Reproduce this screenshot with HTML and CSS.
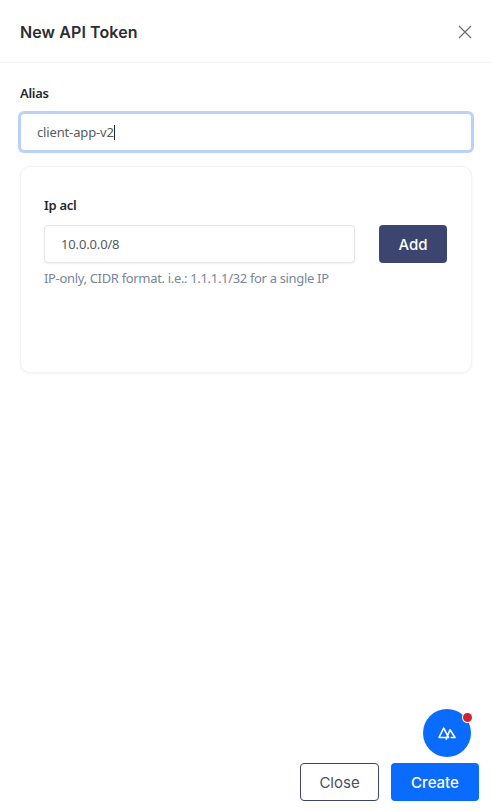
FILE: index.html
```html
<!DOCTYPE html>
<html lang="en">
<head>
  <meta charset="UTF-8" />
  <meta name="viewport" content="width=device-width, initial-scale=1.0"/>
  <title>New API Token</title>
  <link rel="stylesheet" href="styles.css">
</head>
<body>
  <div class="drawer">
    <!-- Header -->
    <header class="drawer-head">
      <h1>New API Token</h1>
      <button class="close-x" aria-label="Close">
        <svg width="14" height="14" viewBox="0 0 14 14"><path d="M1 1L13 13M13 1L1 13" stroke="#6b6f76" stroke-width="1.3" fill="none"/></svg>
      </button>
    </header>

    <!-- Form -->
    <main class="drawer-body">
      <label class="label">Alias</label>
      <div class="input input-focus"><span>client-app-v2</span><i class="caret"></i></div>

      <div class="card">
        <label class="label">Ip acl</label>
        <div class="acl-row">
          <div class="input"><span>10.0.0.0/8</span></div>
          <button class="btn btn-add">Add</button>
        </div>
        <p class="hint">IP-only, CIDR format. i.e.: 1.1.1.1/32 for a single IP</p>
      </div>
    </main>

    <!-- Footer -->
    <footer class="drawer-foot">
      <button class="btn btn-close">Close</button>
      <button class="btn btn-create">Create</button>
    </footer>
  </div>

  <button class="help" aria-label="Help">
    <svg width="18" height="13" viewBox="0 0 18 13"><path d="M1 10.5L5.7 1.2L10.6 10.5ZM8 12.6L12 2.8L17 10.5H12.6" stroke="#fff" stroke-width="1.6" fill="none" stroke-linejoin="round"/></svg>
    <span class="dot"></span>
  </button>
</body>
</html>
```

FILE: styles.css
```css
* {
  box-sizing: border-box;
}
body {
  margin: 0;
  background: #fff;
  font-family: "Noto Sans", sans-serif;
  color: #24262b;
}
.drawer {
  height: 811px;
  display: flex;
  flex-direction: column;
}
.drawer-head {
  height: 63px;
  flex: none;
  display: flex;
  align-items: center;
  justify-content: space-between;
  padding: 1px 20px 0;
  border-bottom: 1px solid #f0f1f3;
}
.drawer-head h1 {
  margin: 0;
  font-family: Inter, sans-serif;
  font-size: 16px;
  font-weight: 600;
  letter-spacing: 0.1px;
  color: #2b2d33;
}
.close-x {
  border: 0;
  padding: 0;
  background: none;
  display: flex;
}
.drawer-body {
  flex: 1;
  padding: 21px 20px 0;
}
.label {
  display: block;
  font-size: 13px;
  font-weight: 600;
  letter-spacing: -0.3px;
  line-height: 18px;
  color: #26282d;
  margin-bottom: 11px;
}
.input {
  height: 38px;
  flex: 1;
  display: flex;
  align-items: center;
  padding: 0 16px;
  background: #fff;
  border: 1px solid #e4e6ea;
  border-radius: 4px;
  box-shadow: 0 1px 2px rgba(0,0,0,0.06);
  font-size: 13px;
  letter-spacing: -0.15px;
  color: #555a60;
}
.input-focus {
  border: 1px solid #b9d2f8;
  box-shadow: 0 0 0 2px #b9d2f8;
}
.caret {
  width: 1px;
  height: 15px;
  background: #222;
}
.card {
  height: 207px;
  margin-top: 15px;
  padding: 29px 23px 0 23px;
  background: #fff;
  border: 1px solid #f2f3f5;
  border-radius: 10px;
  box-shadow: 0 1px 3px rgba(0,0,0,0.05);
}
.acl-row {
  display: flex;
  gap: 24px;
  padding-right: 1px;
}
.hint {
  margin: 6px 0 0;
  font-size: 13px;
  letter-spacing: -0.33px;
  line-height: 18px;
  color: #7a8699;
}
.btn {
  height: 38px;
  border-radius: 4px;
  font-family: Inter, sans-serif;
  font-size: 15px;
  font-weight: 500;
  cursor: pointer;
}
.btn-add {
  width: 68px;
  flex: none;
  background: #3b4570;
  border: 0;
  color: #fff;
}
.drawer-foot {
  flex: none;
  display: flex;
  justify-content: flex-end;
  gap: 12px;
  padding: 0 13px 10px 0;
}
.btn-close {
  width: 79px;
  background: #fff;
  border: 1px solid #3b4570;
  color: #4a4f63;
  font-weight: 400;
}
.btn-create {
  width: 88px;
  background: #0a6cff;
  border: 0;
  color: #fff;
}
.help {
  position: fixed;
  left: 423px;
  top: 709px;
  width: 48px;
  height: 48px;
  border: 0;
  padding: 0;
  border-radius: 50%;
  background: #0a6cff;
  display: flex;
  align-items: center;
  justify-content: center;
}
.dot {
  position: absolute;
  top: 4px;
  right: -1px;
  width: 9px;
  height: 9px;
  border-radius: 50%;
  background: #d3202a;
  box-shadow: 0 0 0 1px #fff;
}
```
